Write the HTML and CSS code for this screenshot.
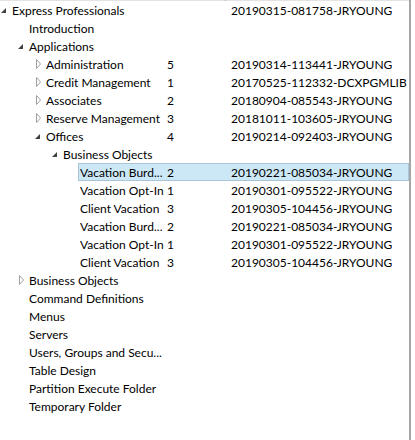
FILE: index.html
```html
<!DOCTYPE html>
<html>
<head>
<meta charset="utf-8">
<link rel="stylesheet" href="styles.css">
</head>
<body>
<div class="tree">
  <div class="header"><span class="hgap"></span><span class="hmark"></span></div>

  <div class="row l0"><span class="tog"><svg width="10" height="18"><polygon points="6,7 6,12 1,12" class="exp"/></svg></span><div class="item"><span class="name">Express Professionals</span><span class="count"></span><span class="ver">20190315-081758-JRYOUNG</span></div></div>
  <div class="row l1"><span class="tog"></span><div class="item"><span class="name">Introduction</span><span class="count"></span><span class="ver"></span></div></div>
  <div class="row l1"><span class="tog"><svg width="10" height="18"><polygon points="6,7 6,12 1,12" class="exp"/></svg></span><div class="item"><span class="name">Applications</span><span class="count"></span><span class="ver"></span></div></div>
  <div class="row l2"><span class="tog"><svg width="10" height="18"><polygon points="2.5,4.5 6.5,9 2.5,13.5" class="col"/></svg></span><div class="item"><span class="name">Administration</span><span class="count">5</span><span class="ver">20190314-113441-JRYOUNG</span></div></div>
  <div class="row l2"><span class="tog"><svg width="10" height="18"><polygon points="2.5,4.5 6.5,9 2.5,13.5" class="col"/></svg></span><div class="item"><span class="name">Credit Management</span><span class="count">1</span><span class="ver">20170525-112332-DCXPGMLIB</span></div></div>
  <div class="row l2"><span class="tog"><svg width="10" height="18"><polygon points="2.5,4.5 6.5,9 2.5,13.5" class="col"/></svg></span><div class="item"><span class="name">Associates</span><span class="count">2</span><span class="ver">20180904-085543-JRYOUNG</span></div></div>
  <div class="row l2"><span class="tog"><svg width="10" height="18"><polygon points="2.5,4.5 6.5,9 2.5,13.5" class="col"/></svg></span><div class="item"><span class="name">Reserve Management</span><span class="count">3</span><span class="ver">20181011-103605-JRYOUNG</span></div></div>
  <div class="row l2"><span class="tog"><svg width="10" height="18"><polygon points="6,7 6,12 1,12" class="exp"/></svg></span><div class="item"><span class="name">Offices</span><span class="count">4</span><span class="ver">20190214-092403-JRYOUNG</span></div></div>
  <div class="row l3"><span class="tog"><svg width="10" height="18"><polygon points="6,7 6,12 1,12" class="exp"/></svg></span><div class="item"><span class="name">Business Objects</span><span class="count"></span><span class="ver"></span></div></div>
  <div class="row l4"><span class="tog"></span><div class="item selected"><span class="name">Vacation Burd...</span><span class="count">2</span><span class="ver">20190221-085034-JRYOUNG</span></div></div>
  <div class="row l4"><span class="tog"></span><div class="item"><span class="name">Vacation Opt-In</span><span class="count">1</span><span class="ver">20190301-095522-JRYOUNG</span></div></div>
  <div class="row l4"><span class="tog"></span><div class="item"><span class="name">Client Vacation</span><span class="count">3</span><span class="ver">20190305-104456-JRYOUNG</span></div></div>
  <div class="row l4"><span class="tog"></span><div class="item"><span class="name">Vacation Burd...</span><span class="count">2</span><span class="ver">20190221-085034-JRYOUNG</span></div></div>
  <div class="row l4"><span class="tog"></span><div class="item"><span class="name">Vacation Opt-In</span><span class="count">1</span><span class="ver">20190301-095522-JRYOUNG</span></div></div>
  <div class="row l4"><span class="tog"></span><div class="item"><span class="name">Client Vacation</span><span class="count">3</span><span class="ver">20190305-104456-JRYOUNG</span></div></div>
  <div class="row l1"><span class="tog"><svg width="10" height="18"><polygon points="2.5,4.5 6.5,9 2.5,13.5" class="col"/></svg></span><div class="item"><span class="name">Business Objects</span><span class="count"></span><span class="ver"></span></div></div>
  <div class="row l1"><span class="tog"></span><div class="item"><span class="name">Command Definitions</span><span class="count"></span><span class="ver"></span></div></div>
  <div class="row l1"><span class="tog"></span><div class="item"><span class="name">Menus</span><span class="count"></span><span class="ver"></span></div></div>
  <div class="row l1"><span class="tog"></span><div class="item"><span class="name">Servers</span><span class="count"></span><span class="ver"></span></div></div>
  <div class="row l1"><span class="tog"></span><div class="item"><span class="name">Users, Groups and Secu...</span><span class="count"></span><span class="ver"></span></div></div>
  <div class="row l1"><span class="tog"></span><div class="item"><span class="name">Table Design</span><span class="count"></span><span class="ver"></span></div></div>
  <div class="row l1"><span class="tog"></span><div class="item"><span class="name">Partition Execute Folder</span><span class="count"></span><span class="ver"></span></div></div>
  <div class="row l1"><span class="tog"></span><div class="item"><span class="name">Temporary Folder</span><span class="count"></span><span class="ver"></span></div></div>
</div>
</body>
</html>
```
FILE: styles.css
```css
html, body {
  margin: 0;
  padding: 0;
  background: #ffffff;
}

.tree {
  width: 409px;
  height: 440px;
  border-right: 2px solid #a6a6a6;
  font-family: Lato, "Noto Sans", sans-serif;
  font-size: 12px;
  color: #000000;
  box-sizing: content-box;
}

.header {
  display: flex;
  height: 1px;
  background: #e3e3e3;
}

.hgap {
  width: 225px;
}

.hmark {
  width: 1px;
  background: #b5b5b5;
}

.row {
  display: flex;
  height: 18px;
}

.tog {
  width: 10px;
  height: 18px;
  flex: none;
}

.tog svg {
  display: block;
}

.exp {
  fill: #404040;
}

.col {
  fill: #ffffff;
  stroke: #a0a0a0;
  stroke-width: 1;
}

.l0 .tog { margin-left: 0; }
.l1 .tog { margin-left: 17px; }
.l2 .tog { margin-left: 34px; }
.l3 .tog { margin-left: 51px; }
.l4 .tog { margin-left: 68px; }

.item {
  flex: 1;
  display: grid;
  grid-template-columns: var(--nw) 65px 1fr;
  align-items: center;
  height: 18px;
  box-sizing: border-box;
  border: 1px solid transparent;
  line-height: 16px;
  padding-top: 1px;
  white-space: nowrap;
}

.l0 .item { --nw: 154px; }
.l1 .item { --nw: 137px; }
.l2 .item { --nw: 120px; }
.l3 .item { --nw: 103px; }
.l4 .item { --nw: 86px; }

.item.selected {
  background: #cce8f7;
  border-color: #a9c6d8;
}

.name {
  padding-left: 1px;
}

.count {
  padding-left: 2px;
}

.ver {
  padding-left: 1px;
}
```
